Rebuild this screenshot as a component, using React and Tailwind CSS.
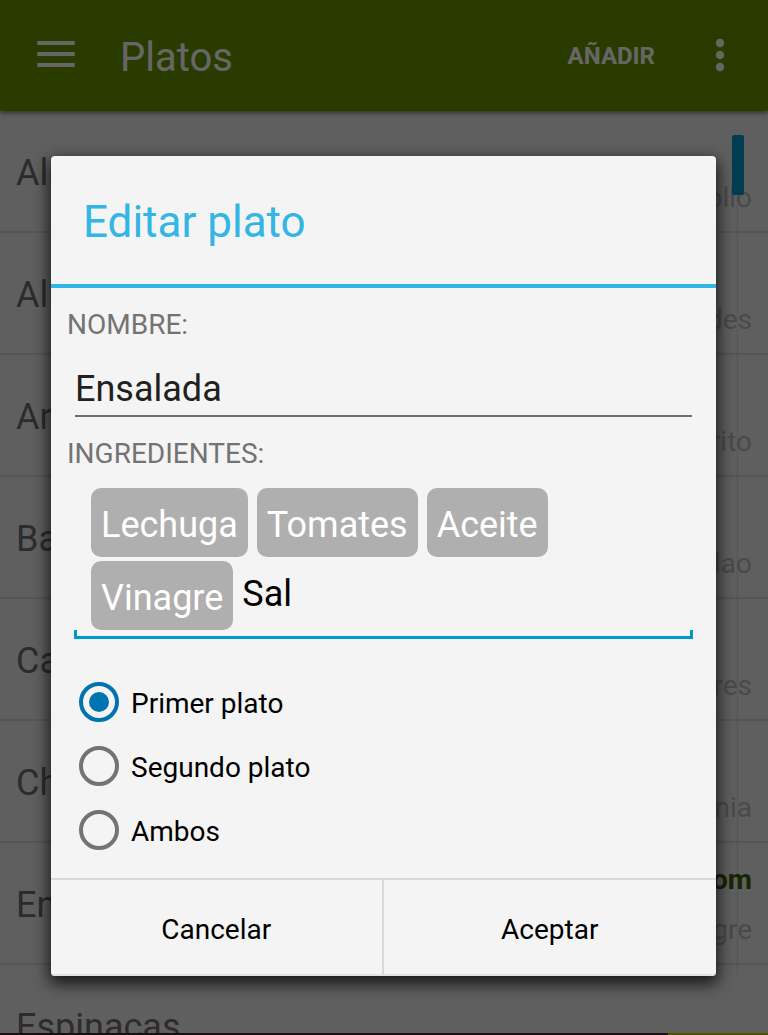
import { useState } from "react";

const dishes = [
  { name: "Alitas", detail: "Pollo" },
  { name: "Aliño", detail: "Verdes" },
  { name: "Arroz", detail: "Frito" },
  { name: "Bao", detail: "Bacalao" },
  { name: "Cazo", detail: "Pures" },
  { name: "Chili", detail: "Zinnia" },
  { name: "Ensalada", tag: "Tom", detail: "Vinagre" },
  { name: "Espinacas" },
];

const courses = ["Primer plato", "Segundo plato", "Ambos"];

function Header() {
  return (
    <header className="relative z-10 flex h-[111px] shrink-0 items-center bg-[#699400] pl-9 pr-7 text-white shadow-[0_2px_5px_rgba(0,0,0,0.5)]">
      <button type="button" aria-label="Menú">
        <svg width="40" height="30" viewBox="0 0 40 30" fill="currentColor" aria-hidden="true">
          <rect x="1.3" y="0" width="37.4" height="4" />
          <rect x="1.3" y="11" width="37.4" height="4" />
          <rect x="1.3" y="22" width="37.4" height="4" />
        </svg>
      </button>
      <h1 className="ml-11 flex-1 pt-1 text-[40px] leading-12">Platos</h1>
      <button type="button" className="text-2xl font-bold">AÑADIR</button>
      <button type="button" aria-label="Más opciones" className="ml-[45px]">
        <svg width="40" height="42" viewBox="0 0 40 42" fill="currentColor" aria-hidden="true">
          <circle cx="20" cy="8" r="4.2" />
          <circle cx="20" cy="20" r="4.2" />
          <circle cx="20" cy="32" r="4.2" />
        </svg>
      </button>
    </header>
  );
}

function DishRow({ name, tag, detail }) {
  return (
    <li className="flex h-[122px] shrink-0 items-center justify-between border-b-2 border-[#d4d4d4] px-4">
      <span className="pt-1 text-4xl leading-12 text-[#6e6e6e]">{name}</span>
      <span className="flex h-full flex-col justify-end pb-4 text-right text-[28px] leading-[34px]">
        {tag && <b className="mb-4 text-[#3c5c00]">{tag}</b>}
        <span className="text-[#b8b8b8]">{detail}</span>
      </span>
    </li>
  );
}

function Chip({ children }) {
  return (
    <span className="flex h-[69px] items-center rounded-[10px] bg-[#afafaf] px-2.5 pt-1 text-4xl text-white">
      {children}
    </span>
  );
}

function EditDialog() {
  const [name, setName] = useState("Ensalada");
  const [ingredient, setIngredient] = useState("Sal");
  const [course, setCourse] = useState(courses[0]);

  return (
    <form
      role="dialog"
      aria-labelledby="dialog-title"
      className="w-full overflow-hidden rounded-[4px] bg-[#f4f4f4] text-black shadow-[0_6px_16px_2px_rgba(0,0,0,0.75)]"
    >
      <h2
        id="dialog-title"
        className="flex h-32 items-center px-8 pt-1 text-[44px] text-[#33b5e5]"
      >
        Editar plato
      </h2>
      <div className="border-t-4 border-[#33b5e5] px-4 pt-[21px] pb-4">
        <label htmlFor="dish-name" className="block text-[28px] leading-8 text-[#737373]">
          NOMBRE:
        </label>
        <div className="mt-[21px] px-2">
          <input
            id="dish-name"
            value={name}
            onChange={(e) => setName(e.target.value)}
            className="block h-[55px] w-full border-b-2 border-[#6f6f6f] text-4xl text-[#212121] outline-none"
          />
        </div>
        <label htmlFor="dish-ingredient" className="mt-[21px] block text-[28px] leading-8 text-[#737373]">
          INGREDIENTES:
        </label>
        <div className="mt-[18px] px-[7px]">
          <div className="flex flex-wrap gap-x-[9px] gap-y-1 px-[17px]">
            <Chip>Lechuga</Chip>
            <Chip>Tomates</Chip>
            <Chip>Aceite</Chip>
            <Chip>Vinagre</Chip>
            <input
              id="dish-ingredient"
              value={ingredient}
              onChange={(e) => setIngredient(e.target.value)}
              className="h-[69px] min-w-40 flex-1 pb-1 text-4xl outline-none"
            />
          </div>
          <div className="h-[9px] border-x-3 border-b-3 border-[#0099cc]" />
        </div>
        <fieldset className="mt-[31px] px-3">
          <legend className="sr-only">Tipo de plato</legend>
          {courses.map((option) => (
            <label key={option} className="flex h-16 items-center gap-3">
              <input
                type="radio"
                name="course"
                checked={course === option}
                onChange={() => setCourse(option)}
                className="grid size-10 appearance-none place-content-center rounded-full border-4 border-[#737373] before:size-5 before:rounded-full checked:border-[#0073b1] checked:before:bg-[#0073b1]"
              />
              <span className="pt-1 text-[28px] leading-8">{option}</span>
            </label>
          ))}
        </fieldset>
      </div>
      <div className="grid h-[98px] grid-cols-2 border-y-2 border-t-[#d9d9d9] border-b-[#e2e2e2] text-[28px]">
        <button type="button" className="border-r-2 border-[#d9d9d9] pt-1.5">Cancelar</button>
        <button type="button" className="pt-1.5">Aceptar</button>
      </div>
    </form>
  );
}

export default function App() {
  return (
    <div className="relative flex h-screen flex-col overflow-hidden bg-[#eeeeee] font-['Roboto',sans-serif]">
      <Header />
      <main className="relative min-h-0 flex-1 overflow-hidden">
        <ul className="flex flex-col">
          {dishes.map((dish) => (
            <DishRow key={dish.name} {...dish} />
          ))}
        </ul>
        <div className="absolute top-6 right-6 bottom-[58px] w-3 pl-[5px]">
          <div className="h-full w-px bg-black/10" />
          <div className="absolute top-0 left-0 h-[60px] w-3 rounded-[2px] bg-[#0099cc]" />
        </div>
      </main>
      <footer className="flex h-0.5 shrink-0 justify-end bg-[#372d32]">
        <div className="w-[100px] bg-[#c1d508]" />
      </footer>
      <div className="absolute inset-0 z-20 overflow-hidden bg-black/60 pt-[156px] pr-[52px] pl-[51px]">
        <EditDialog />
      </div>
    </div>
  );
}
